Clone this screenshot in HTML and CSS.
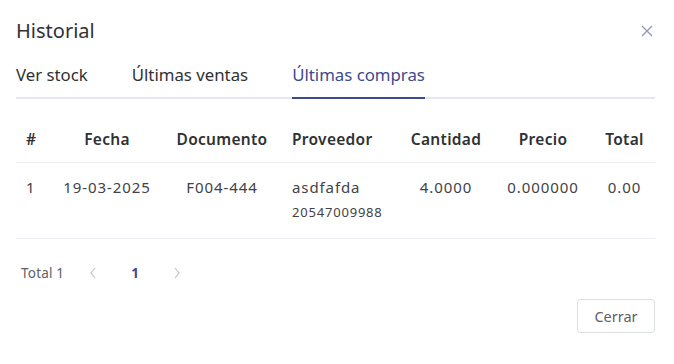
FILE: index.html
```html
<!DOCTYPE html>
<html lang="es">
<head>
<meta charset="UTF-8">
<meta name="viewport" content="width=device-width, initial-scale=1.0">
<title>Historial</title>
<link rel="stylesheet" href="styles.css">
</head>
<body>

<div class="dialog">
  <div class="dialog-header">
    <span class="dialog-title">Historial</span>
    <button class="close-btn" aria-label="Cerrar">
      <svg width="12" height="12" viewBox="0 0 12 12"><path d="M1 1L11 11M11 1L1 11" stroke="#8e97b8" stroke-width="1.3" fill="none"/></svg>
    </button>
  </div>

  <div class="tabs">
    <div class="tab">Ver stock</div>
    <div class="tab">Últimas ventas</div>
    <div class="tab active">Últimas compras</div>
  </div>

  <table class="grid">
    <colgroup>
      <col style="width:34px">
      <col style="width:114px">
      <col style="width:116px">
      <col style="width:120px">
      <col style="width:92px">
      <col style="width:102px">
      <col style="width:61px">
    </colgroup>
    <thead>
      <tr>
        <th class="left">#</th>
        <th>Fecha</th>
        <th>Documento</th>
        <th class="left">Proveedor</th>
        <th>Cantidad</th>
        <th>Precio</th>
        <th>Total</th>
      </tr>
    </thead>
    <tbody>
      <tr>
        <td class="left">1</td>
        <td>19-03-2025</td>
        <td>F004-444</td>
        <td class="left">asdfafda<div class="sub">20547009988</div></td>
        <td>4.0000</td>
        <td>0.000000</td>
        <td>0.00</td>
      </tr>
    </tbody>
  </table>

  <div class="pager">
    <span class="pager-total">Total 1</span>
    <span class="pager-arrow">
      <svg width="8" height="12" viewBox="0 0 8 12"><path d="M6 1L2 6L6 11" stroke="#c0c4cc" stroke-width="1.2" fill="none"/></svg>
    </span>
    <span class="pager-num">1</span>
    <span class="pager-arrow">
      <svg width="8" height="12" viewBox="0 0 8 12"><path d="M2 1L6 6L2 11" stroke="#c0c4cc" stroke-width="1.2" fill="none"/></svg>
    </span>
  </div>

  <div class="dialog-footer">
    <button class="btn">Cerrar</button>
  </div>
</div>

</body>
</html>
```

FILE: styles.css
```css
body {
  margin: 0;
  font-family: "Noto Sans", sans-serif;
  color: #303133;
  background-color: #fff;
}

.dialog {
  width: 639px;
  padding: 0 19px 0 16px;
}

.dialog-header {
  display: flex;
  justify-content: space-between;
  align-items: center;
  height: 61px;
}

.dialog-title {
  font-size: 20px;
  color: #303133;
}

.close-btn {
  border: none;
  background: none;
  padding: 0;
  margin-right: 2px;
  display: flex;
  cursor: pointer;
}

.tabs {
  display: flex;
  border-bottom: 2px solid #e4e7ed;
}

.tab {
  font-size: 16.8px;
  padding: 2px 0 11px;
  margin-right: 44px;
  margin-bottom: -2px;
  border-bottom: 2px solid transparent;
}

.tab.active {
  color: #3d4a8c;
  border-bottom-color: #3d4a8c;
}

.grid {
  width: 639px;
  table-layout: fixed;
  border-collapse: collapse;
  margin-top: 16px;
  font-size: 15px;
}

.grid th,
.grid td {
  text-align: center;
  border-bottom: 1px solid #ebeef5;
  padding: 0;
  vertical-align: top;
}

.grid th {
  font-weight: 600;
  font-size: 15.5px;
  letter-spacing: 0.3px;
  height: 47px;
  vertical-align: middle;
}

.grid td {
  padding: 12px 0 13px;
  line-height: 24px;
  letter-spacing: 0.9px;
  color: #404247;
}

.grid .left {
  text-align: left;
  padding-left: 10px;
}

.grid th:nth-child(4),
.grid td:nth-child(4) {
  padding-left: 12px;
}

.grid .sub {
  font-size: 13px;
  letter-spacing: 0.8px;
  line-height: 26px;
}

.pager {
  display: flex;
  align-items: center;
  height: 32px;
  margin-top: 18px;
  padding-left: 5px;
  font-size: 13.5px;
  letter-spacing: 0.2px;
  color: #606266;
}

.pager-total {
  margin-right: 21px;
}

.pager-arrow {
  display: flex;
  justify-content: center;
  width: 16px;
}

.pager-num {
  width: 68px;
  text-align: center;
  font-weight: 700;
  color: #3d4a8c;
}

.dialog-footer {
  display: flex;
  justify-content: flex-end;
  margin-top: 10px;
}

.btn {
  font-family: inherit;
  font-size: 14.5px;
  color: #606266;
  background: #fff;
  border: 1px solid #dcdfe6;
  border-radius: 4px;
  width: 78px;
  height: 34px;
  cursor: pointer;
}
```
